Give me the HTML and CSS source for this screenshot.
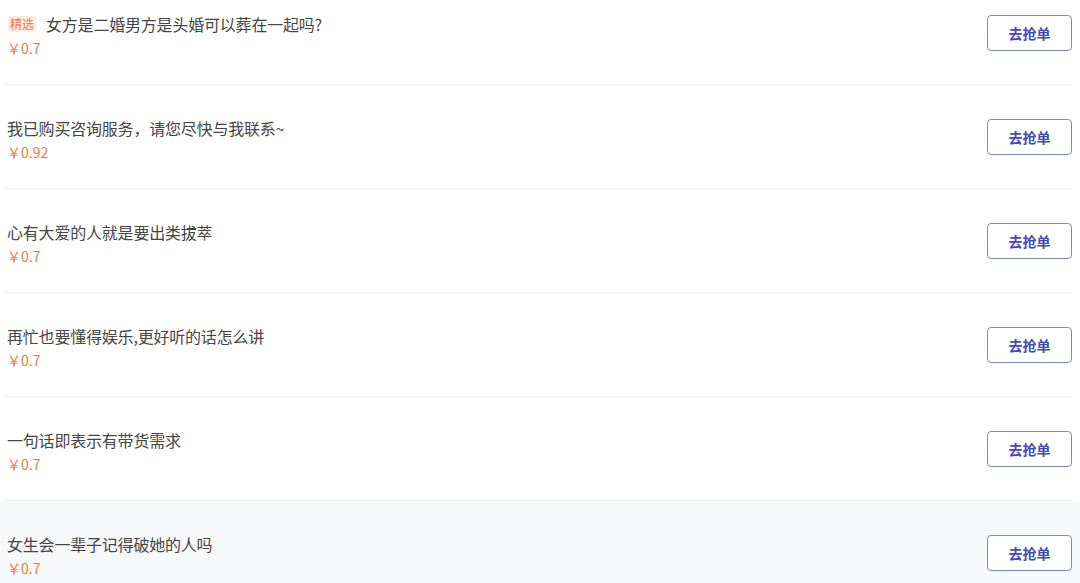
FILE: index.html
```html
<!DOCTYPE html>
<html lang="zh-CN">
<head>
<meta charset="utf-8">
<title>抢单列表</title>
<link rel="stylesheet" href="styles.css">
</head>
<body>
<ul class="list">
  <li class="row">
    <div class="info">
      <div class="title"><span class="tag">精选</span>女方是二婚男方是头婚可以葬在一起吗?</div>
      <div class="price">￥0.7</div>
    </div>
    <button class="grab">去抢单</button>
  </li>
  <li class="row">
    <div class="info">
      <div class="title">我已购买咨询服务，请您尽快与我联系~</div>
      <div class="price">￥0.92</div>
    </div>
    <button class="grab">去抢单</button>
  </li>
  <li class="row">
    <div class="info">
      <div class="title">心有大爱的人就是要出类拔萃</div>
      <div class="price">￥0.7</div>
    </div>
    <button class="grab">去抢单</button>
  </li>
  <li class="row">
    <div class="info">
      <div class="title">再忙也要懂得娱乐,更好听的话怎么讲</div>
      <div class="price">￥0.7</div>
    </div>
    <button class="grab">去抢单</button>
  </li>
  <li class="row">
    <div class="info">
      <div class="title">一句话即表示有带货需求</div>
      <div class="price">￥0.7</div>
    </div>
    <button class="grab">去抢单</button>
  </li>
  <li class="row row-active">
    <div class="info">
      <div class="title">女生会一辈子记得破她的人吗</div>
      <div class="price">￥0.7</div>
    </div>
    <button class="grab">去抢单</button>
  </li>
</ul>
</body>
</html>
```

FILE: styles.css
```css
html, body {
  margin: 0;
  padding: 0;
  background: #ffffff;
  overflow: hidden;
}
body {
  font-family: "Noto Sans CJK SC", "Noto Sans", sans-serif;
  color: #444;
}
.list {
  list-style: none;
  margin: -19px 0 0 0;
  padding: 0;
}
.row {
  display: flex;
  align-items: center;
  justify-content: space-between;
  height: 103px;
  margin: 0 8px 0 6px;
  padding: 0 0 0 1px;
  border-bottom: 1px solid #ededed;
}
.row-active {
  margin: 0;
  padding: 0 8px 0 7px;
  background: #f7f8fa;
  border-bottom: none;
}
.info {
  display: flex;
  flex-direction: column;
  padding-top: 6px;
}
.title {
  display: flex;
  align-items: center;
  font-size: 16px;
  line-height: 22px;
  color: #454545;
  letter-spacing: -0.2px;
}
.tag {
  display: inline-block;
  margin: 0 10px 0 1px;
  padding: 0 2px;
  height: 16px;
  line-height: 16px;
  font-size: 12px;
  letter-spacing: 0;
  color: #f07c45;
  background: #fdece3;
  border-radius: 2px;
}
.price {
  margin-top: 3px;
  font-size: 14px;
  line-height: 20px;
  color: #f07a3c;
}
.grab {
  width: 85px;
  height: 36px;
  border: 1px solid #7b85d8;
  border-radius: 4px;
  background: #ffffff;
  color: #3f4bbd;
  font-family: "Noto Sans CJK SC", "Noto Sans", sans-serif;
  font-size: 14px;
  font-weight: 700;
  padding: 0;
  cursor: pointer;
}
```
